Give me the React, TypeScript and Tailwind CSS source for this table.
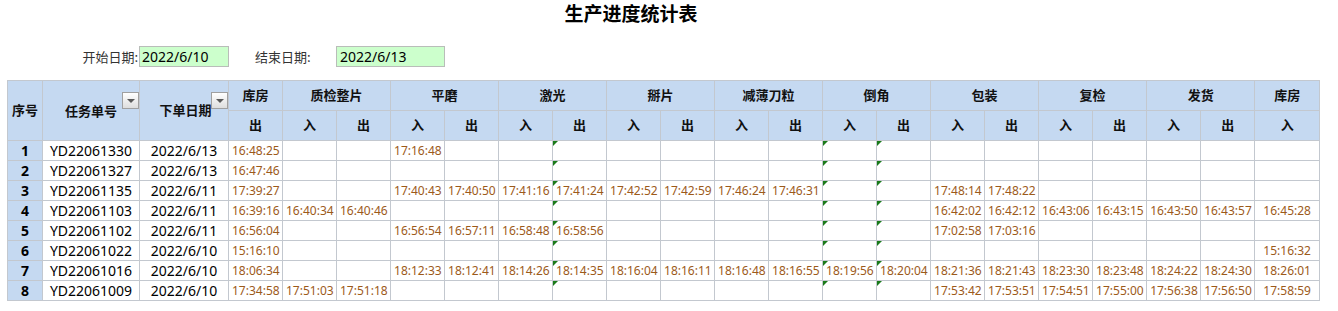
const stages = ['质检整片', '平磨', '激光', '掰片', '减薄刀粒', '倒角', '包装', '复检', '发货'];

const rows: { no: number; id: string; date: string; t: string[] }[] = [
  { no: 1, id: 'YD22061330', date: '2022/6/13', t: ['16:48:25', '', '', '17:16:48', '', '', '', '', '', '', '', '', '', '', '', '', '', '', '', ''] },
  { no: 2, id: 'YD22061327', date: '2022/6/13', t: ['16:47:46', '', '', '', '', '', '', '', '', '', '', '', '', '', '', '', '', '', '', ''] },
  { no: 3, id: 'YD22061135', date: '2022/6/11', t: ['17:39:27', '', '', '17:40:43', '17:40:50', '17:41:16', '17:41:24', '17:42:52', '17:42:59', '17:46:24', '17:46:31', '', '', '17:48:14', '17:48:22', '', '', '', '', ''] },
  { no: 4, id: 'YD22061103', date: '2022/6/11', t: ['16:39:16', '16:40:34', '16:40:46', '', '', '', '', '', '', '', '', '', '', '16:42:02', '16:42:12', '16:43:06', '16:43:15', '16:43:50', '16:43:57', '16:45:28'] },
  { no: 5, id: 'YD22061102', date: '2022/6/11', t: ['16:56:04', '', '', '16:56:54', '16:57:11', '16:58:48', '16:58:56', '', '', '', '', '', '', '17:02:58', '17:03:16', '', '', '', '', ''] },
  { no: 6, id: 'YD22061022', date: '2022/6/10', t: ['15:16:10', '', '', '', '', '', '', '', '', '', '', '', '', '', '', '', '', '', '', '15:16:32'] },
  { no: 7, id: 'YD22061016', date: '2022/6/10', t: ['18:06:34', '', '', '18:12:33', '18:12:41', '18:14:26', '18:14:35', '18:16:04', '18:16:11', '18:16:48', '18:16:55', '18:19:56', '18:20:04', '18:21:36', '18:21:43', '18:23:30', '18:23:48', '18:24:22', '18:24:30', '18:26:01'] },
  { no: 8, id: 'YD22061009', date: '2022/6/10', t: ['17:34:58', '17:51:03', '17:51:18', '', '', '', '', '', '', '', '', '', '', '17:53:42', '17:53:51', '17:54:51', '17:55:00', '17:56:38', '17:56:50', '17:58:59'] },
];

// columns showing Excel's green error marker
const flagged = [6, 11, 12];

function FilterButton() {
  return (
    <span className="absolute top-[11px] right-0 flex h-[17px] w-[17px] items-center justify-center border border-[#a0a0a0] bg-gradient-to-b from-white to-[#dedede]">
      <span className="h-0 w-0 border-x-[4px] border-t-[4px] border-x-transparent border-t-[#5a5a5a]" />
    </span>
  );
}

export default function App() {
  const cell = 'border border-[#c3c8cf]';
  const head = `${cell} bg-[#c5d9f1] text-center text-[13px] font-bold text-[#111]`;

  return (
    <div className="h-[311px] w-[1338px] bg-white font-['Noto_Sans','Noto_Sans_CJK_SC',sans-serif] text-black">
      <div className="flex h-[26px] w-[1262px] items-center justify-center text-[19px] font-bold font-['Noto_Sans_CJK_SC',sans-serif]">
        生产进度统计表
      </div>

      <div className="mt-[20px] flex h-[21px] items-center text-[13px] text-[#333]">
        <span className="w-[139px] pr-[1px] text-right font-['Noto_Sans_CJK_SC',sans-serif]">开始日期:</span>
        <span className="flex h-[21px] w-[90px] items-center border border-[#b9bdb9] bg-[#ccffcc] pl-[2px] text-[14px] text-black">
          2022/6/10
        </span>
        <span className="ml-[26px] w-[81px] font-['Noto_Sans_CJK_SC',sans-serif]">结束日期:</span>
        <span className="flex h-[21px] w-[109px] items-center border border-[#b9bdb9] bg-[#ccffcc] pl-[3px] text-[14px] text-black">
          2022/6/13
        </span>
      </div>

      <table className="mt-[13px] ml-[7px] w-[1312px] table-fixed border-collapse">
        <colgroup>
          <col className="w-[35px]" />
          <col className="w-[97px]" />
          <col className="w-[89px]" />
          {Array.from({ length: 19 }).map((_, i) => (
            <col key={i} className="w-[54px]" />
          ))}
          <col className="w-[65px]" />
        </colgroup>
        <thead>
          <tr className="h-[30px]">
            <th rowSpan={2} className={head}>序号</th>
            <th rowSpan={2} className={`${head} relative`}>
              <span className="relative top-[1px]">任务单号</span>
              <FilterButton />
            </th>
            <th rowSpan={2} className={`${head} relative`}>
              <span className="pl-[3px]">下单日期</span>
              <FilterButton />
            </th>
            <th className={head}>库房</th>
            {stages.map((s) => (
              <th key={s} colSpan={2} className={head}>{s}</th>
            ))}
            <th className={head}>库房</th>
          </tr>
          <tr className="h-[30px]">
            <th className={head}>出</th>
            {stages.map((s) => [
              <th key={`${s}-in`} className={head}>入</th>,
              <th key={`${s}-out`} className={head}>出</th>,
            ])}
            <th className={head}>入</th>
          </tr>
        </thead>
        <tbody>
          {rows.map((r) => (
            <tr key={r.no} className="h-[20px]">
              <td className={`${cell} bg-[#c5d9f1] p-0 text-center text-[14px] font-bold leading-[18px]`}>{r.no}</td>
              <td className={`${cell} p-0 text-center text-[14px] leading-[18px]`}>{r.id}</td>
              <td className={`${cell} p-0 text-center text-[14px] leading-[18px]`}>{r.date}</td>
              {r.t.map((v, i) => (
                <td
                  key={i}
                  className={`${cell} relative p-0 text-[12px] leading-[18px] text-[#9c5a1a] ${
                    i === 19 ? 'text-center' : 'pl-[3px] text-left'
                  }`}
                >
                  {flagged.includes(i) ? (
                    <span className="absolute top-0 left-0 h-0 w-0 border-r-[5px] border-t-[5px] border-r-transparent border-t-[#1a7a1a]" />
                  ) : null}
                  {v}
                </td>
              ))}
            </tr>
          ))}
        </tbody>
      </table>
    </div>
  );
}
